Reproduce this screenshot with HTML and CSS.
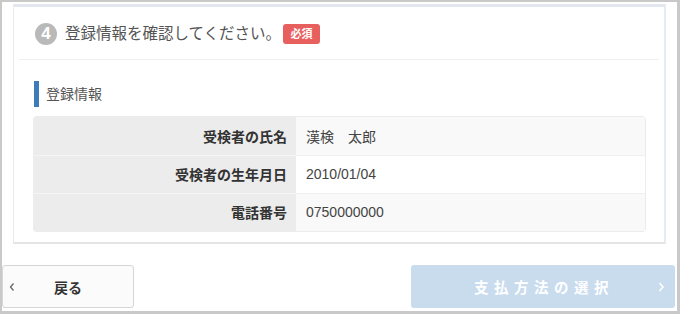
FILE: index.html
```html
<!DOCTYPE html>
<html lang="ja">
<head>
  <meta charset="UTF-8" />
  <meta name="viewport" content="width=device-width, initial-scale=1.0"/>
  <title>登録情報の確認</title>
  <link rel="stylesheet" href="styles.css">
</head>
<body>
  <div class="frame">
    <section class="panel">
      <div class="step-head">
        <span class="step-num">4</span>
        <h2 class="step-title">登録情報を確認してください。</h2>
        <span class="badge">必須</span>
      </div>
      <div class="panel-body">
        <h3 class="sub-title">登録情報</h3>
        <table class="info-table">
          <tr>
            <th>受検者の氏名</th>
            <td>漢検　太郎</td>
          </tr>
          <tr>
            <th>受検者の生年月日</th>
            <td>2010/01/04</td>
          </tr>
          <tr>
            <th>電話番号</th>
            <td>0750000000</td>
          </tr>
        </table>
      </div>
    </section>

    <div class="actions">
      <a class="btn btn-back" href="#">
        <svg class="chev chev-left" width="6" height="9" viewBox="0 0 6 9"><polyline points="4.5,1 1.5,4.5 4.5,8" fill="none" stroke="#666" stroke-width="1.3"/></svg>
        戻る
      </a>
      <a class="btn btn-next" href="#">
        支払方法の選択
        <svg class="chev chev-right" width="7" height="10" viewBox="0 0 7 10"><polyline points="1.5,1 5,5 1.5,9" fill="none" stroke="#fff" stroke-width="1.6"/></svg>
      </a>
    </div>
  </div>
</body>
</html>
```

FILE: styles.css
```css
* {
  box-sizing: border-box;
}

body {
  margin: 0;
  font-family: 'Liberation Sans', 'Noto Sans CJK JP', sans-serif;
  background: #fff;
  color: #333;
}

.frame {
  width: 680px;
  height: 314px;
  border-style: solid;
  border-color: #c9c9c9;
  border-width: 2px 3px 3px 2px;
  background: #fff;
  display: flex;
  flex-direction: column;
}

.panel {
  margin: 2px 11px 0 11px;
  height: 240px;
  border-style: solid;
  border-color: #e6ebf0;
  border-width: 3px 2px 2px 1px;
  border-top-color: #e1e7ed;
  border-bottom-color: #e4e4e4;
  background: #fff;
}

.step-head {
  display: flex;
  align-items: center;
  margin: 0 5px;
  padding: 16px 0 14px 16px;
  border-bottom: 1px solid #efefef;
}

.step-num {
  width: 22px;
  height: 22px;
  border-radius: 50%;
  background: #b9b9b9;
  color: #fff;
  font-weight: bold;
  font-size: 17px;
  line-height: 22px;
  text-align: center;
}

.step-title {
  margin: 0 0 0 8px;
  font-size: 15.5px;
  font-weight: normal;
  color: #555;
  line-height: 22px;
}

.badge {
  margin-left: 2px;
  width: 37px;
  height: 20px;
  border-radius: 3px;
  background: #e8605e;
  color: #fff;
  font-size: 11px;
  font-weight: bold;
  line-height: 20px;
  text-align: center;
}

.panel-body {
  padding: 21px 19px 10px 20px;
}

.sub-title {
  margin: 0 0 10px;
  padding-left: 7px;
  border-left: 5px solid #3d7cb9;
  font-size: 14px;
  font-weight: normal;
  color: #555;
  line-height: 26px;
}

.info-table {
  width: 100%;
  border-collapse: collapse;
  font-size: 14px;
  box-shadow: 0 0 0 1px #ececec;
  border-radius: 3px;
}

.info-table th,
.info-table td {
  height: 38px;
  padding: 0 9px;
  border-top: 1px solid #f0f0f0;
}

.info-table tr:first-child th,
.info-table tr:first-child td {
  border-top: none;
}

.info-table th {
  width: 262px;
  background: #ececec;
  text-align: right;
  font-weight: bold;
  color: #333;
  border-top-color: #f5f5f5;
}

.info-table td {
  padding-left: 10px;
  background: #f9f9f9;
  color: #444;
}

.info-table tr:nth-child(2) td {
  background: #fff;
}

.actions {
  display: flex;
  justify-content: space-between;
  margin-top: 21px;
  padding-right: 2px;
}

.btn {
  position: relative;
  display: flex;
  align-items: center;
  justify-content: center;
  height: 43px;
  border-radius: 3px;
  text-decoration: none;
  font-weight: bold;
  font-size: 14px;
}

.btn-back {
  width: 132px;
  border: 1px solid #d6d6d6;
  background: #fbfbfb;
  color: #333;
}

.btn-next {
  width: 264px;
  background: #c8dcee;
  color: #fff;
  font-size: 14.5px;
  letter-spacing: 5.5px;
  padding-left: 2px;
}

.chev {
  position: absolute;
  top: 50%;
  transform: translateY(-50%);
}

.chev-left {
  left: 6px;
}

.chev-right {
  right: 10px;
}
```
